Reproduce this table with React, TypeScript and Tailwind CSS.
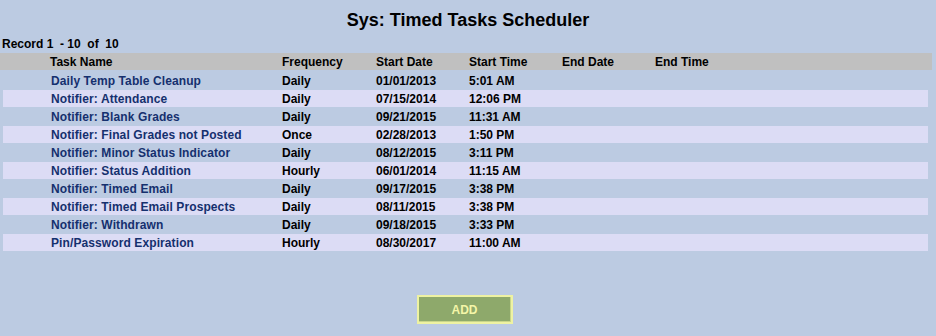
const ROWS = [
  ['Daily Temp Table Cleanup', 'Daily', '01/01/2013', '5:01 AM'],
  ['Notifier: Attendance', 'Daily', '07/15/2014', '12:06 PM'],
  ['Notifier: Blank Grades', 'Daily', '09/21/2015', '11:31 AM'],
  ['Notifier: Final Grades not Posted', 'Once', '02/28/2013', '1:50 PM'],
  ['Notifier: Minor Status Indicator', 'Daily', '08/12/2015', '3:11 PM'],
  ['Notifier: Status Addition', 'Hourly', '06/01/2014', '11:15 AM'],
  ['Notifier: Timed Email', 'Daily', '09/17/2015', '3:38 PM'],
  ['Notifier: Timed Email Prospects', 'Daily', '08/11/2015', '3:38 PM'],
  ['Notifier: Withdrawn', 'Daily', '09/18/2015', '3:33 PM'],
  ['Pin/Password Expiration', 'Hourly', '08/30/2017', '11:00 AM'],
]

function App() {
  return (
    <main className="h-[336px] w-[936px] overflow-hidden bg-[#bccbe2] font-['Liberation_Sans',Arial,sans-serif] font-bold text-black">
      <h1 className="pt-[9px] text-center text-[18px] leading-[22px]">Sys: Timed Tasks Scheduler</h1>

      <div className="mt-[6px] pl-[2px] text-[12px] leading-[14px] whitespace-pre">Record 1  - 10  of  10</div>

      <div className="mt-[2px] w-[932px]">
        <div className="flex h-[17px] items-center bg-[#c0c0c0] text-[12px]">
          <span className="w-[282px] pl-[50px]">Task Name</span>
          <span className="w-[94px]">Frequency</span>
          <span className="w-[93px]">Start Date</span>
          <span className="w-[93px]">Start Time</span>
          <span className="w-[93px]">End Date</span>
          <span>End Time</span>
        </div>

        <div className="pt-px">
          {ROWS.map(([name, freq, date, time], i) => (
            <div key={name} className="h-[18px] pt-px">
              <div
                className={`ml-[3px] flex h-[17px] w-[925px] items-center text-[12px] ${
                  i % 2 === 1 ? 'bg-[#dcdcf5]' : ''
                }`}
              >
                <span className="w-[279px] pl-[48px] tracking-[0.1px] text-[#15306e]">{name}</span>
                <span className="w-[94px]">{freq}</span>
                <span className="w-[93px]">{date}</span>
                <span>{time}</span>
              </div>
            </div>
          ))}
        </div>
      </div>

      <div className="mt-[44px] flex justify-center">
        <button
          type="button"
          className="ml-[-7px] h-[29px] w-[96px] border-2 border-[#eef2a2] bg-[#8ea96b] text-[12px] text-[#f4f6a8] shadow-[inset_-1px_-1px_0_#c9d68a]"
        >
          ADD
        </button>
      </div>
    </main>
  )
}

export default App
